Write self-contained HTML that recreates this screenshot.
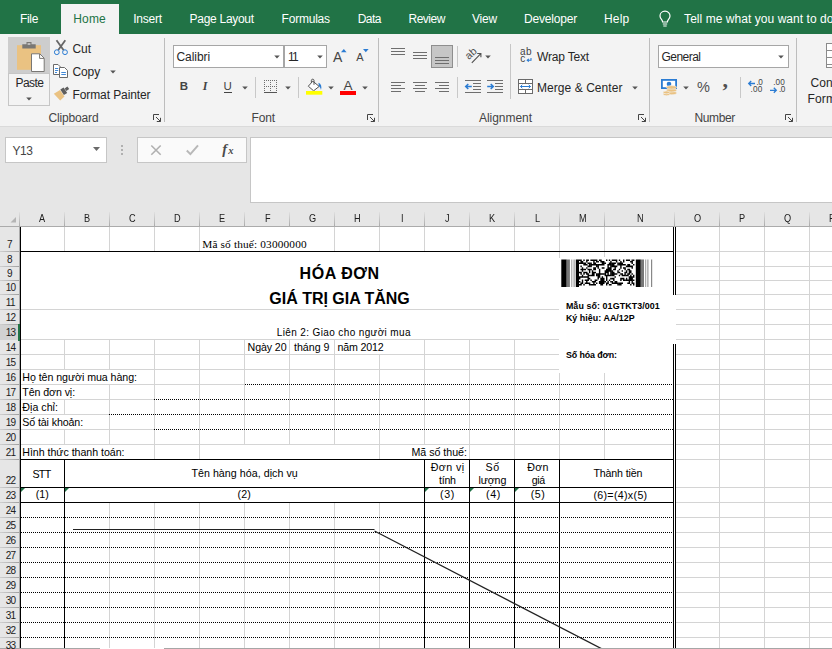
<!DOCTYPE html>
<html><head><meta charset="utf-8"><title>Excel</title>
<style>
*{box-sizing:border-box;margin:0;padding:0}
html,body{width:832px;height:649px;overflow:hidden;background:#e6e6e6}
body{position:relative;font-family:"Liberation Sans",sans-serif;font-size:12px;color:#262626}
.abs{position:absolute}
.r{position:absolute}
.t{position:absolute;white-space:nowrap;line-height:1}
.dot{position:absolute;height:1px;background:repeating-linear-gradient(90deg,#000 0,#000 1px,transparent 1px,transparent 2px)}
.tri{position:absolute;width:0;height:0;border-top:4px solid #1e7145;border-right:4px solid transparent}
#tabs{left:0;top:0;width:832px;height:34px;background:#217346}
#hometab{left:61px;top:4px;width:58px;height:31px;background:#f3f3f3}
#ribbon{left:0;top:34px;width:832px;height:92px;background:#f3f3f3}
.vsep{position:absolute;width:1px;background:#c4c4c4}
.gsep{position:absolute;width:1px;background:#b4b4b4}
.combo{position:absolute;background:#fff;border:1px solid #a6a6a6}
.arr{position:absolute;width:0;height:0;border-left:3px solid transparent;border-right:3px solid transparent;border-top:3px solid #555}
</style></head><body>
<div id="tabs" class="abs"><div id="hometab" class="abs"></div></div>
<div id="ribbon" class="abs"></div>
<div class="r" style="left:164px;top:38px;width:1px;height:84px;background:#bdbdbd"></div>
<div class="r" style="left:378px;top:38px;width:1px;height:84px;background:#bdbdbd"></div>
<div class="r" style="left:649px;top:38px;width:1px;height:84px;background:#bdbdbd"></div>
<div class="r" style="left:796px;top:38px;width:1px;height:84px;background:#bdbdbd"></div>
<div class="r" style="left:8px;top:37px;width:42px;height:37px;background:#cdcdcd"></div>
<div class="r" style="left:8px;top:73px;width:42px;height:33px;background:#f3f3f3;border:1px solid #c6c6c6"></div>
<svg class="abs" style="left:14px;top:40px" width="34" height="34" viewBox="0 0 34 34"><rect x="3" y="5.2" width="24" height="24.6" fill="#eac282"/><path d="M8.3 4.2h4.2v-2.2h5v2.2h4.2v4.4h-13.4z" fill="#797774"/><rect x="13.6" y="3.2" width="2.8" height="1.6" fill="#cdcdcd"/><path d="M17.5 13.8h8.3l4.4 4.4v13.3h-12.7z" fill="#fff" stroke="#797774" stroke-width="1"/><path d="M25.6 14v4.4h4.4" fill="none" stroke="#797774" stroke-width="1"/></svg>
<svg class="abs" style="left:24.5px;top:95.5px" width="8" height="6" viewBox="0 0 8 6"><path d="M1.2 1.6h5.6L4 4.6z" fill="#555"/></svg>
<svg class="abs" style="left:52px;top:39px" width="18" height="18" viewBox="0 0 18 18"><path d="M4.500 1.300L11.700 11.200M13.300 1.300L6.100 11.200" stroke="#666" stroke-width="1.800" fill="none"/><circle cx="4.800" cy="13.200" r="2.400" fill="#f3f3f3" stroke="#2b7cd3" stroke-width="1"/><circle cx="13" cy="13.200" r="2.400" fill="#f3f3f3" stroke="#2b7cd3" stroke-width="1"/></svg>
<svg class="abs" style="left:52px;top:63px" width="18" height="16" viewBox="0 0 18 16"><path d="M1.500 1.500h4.500l2.500 2.500v7.500h-7z" fill="#fff" stroke="#6a6a6a"/><path d="M3 5.500h3.200M3 7.500h3.200M3 9.500h2" stroke="#2b7cd3" stroke-width="0.900"/><path d="M7.500 4.500h5l3 3v7h-8z" fill="#fff" stroke="#6a6a6a"/><path d="M9.300 9.500h4.600M9.300 11.500h4.600" stroke="#2b7cd3" stroke-width="0.900"/></svg>
<svg class="abs" style="left:108.5px;top:68.8px" width="8" height="6" viewBox="0 0 8 6"><path d="M1.2 1.6h5.6L4 4.6z" fill="#555"/></svg>
<svg class="abs" style="left:52px;top:85px" width="19" height="18" viewBox="0 0 19 18"><path d="M1.800 8.700L8 5l4.500 6.500L8.200 15.600z" fill="#eac282"/><path d="M8.300 4.600l3.300-2.100 3.600 5.400-3.300 2.200z" fill="#5e5e5e"/><path d="M12.600 3.500l2.800-1.900 1.800 2.300-2.900 2.100z" fill="#5e5e5e"/></svg>
<svg class="abs" style="left:153px;top:114px" width="9" height="9" viewBox="0 0 9 9"><path d="M0.5 6V0.5H6" stroke="#444" fill="none"/><path d="M3 3L7.5 7.5M7.5 3.8V7.5H3.8" stroke="#444" fill="none"/></svg>
<div class="combo" style="left:173px;top:45px;width:111px;height:23px"></div>
<div class="combo" style="left:284px;top:45px;width:43px;height:23px"></div>
<svg class="abs" style="left:272.5px;top:54px" width="8" height="6" viewBox="0 0 8 6"><path d="M1.2 1.6h5.6L4 4.6z" fill="#555"/></svg>
<svg class="abs" style="left:315.5px;top:54px" width="8" height="6" viewBox="0 0 8 6"><path d="M1.2 1.6h5.6L4 4.6z" fill="#555"/></svg>
<svg class="abs" style="left:340px;top:48px" width="8" height="5" viewBox="0 0 8 5"><path d="M1 4.2L3.8 1l2.8 3.2z" fill="#2b7cd3"/></svg>
<svg class="abs" style="left:362px;top:48px" width="8" height="5" viewBox="0 0 8 5"><path d="M1 1h5.6L3.8 4.2z" fill="#2b7cd3"/></svg>
<div class="r" style="left:223.5px;top:92px;width:8px;height:1px;background:#444"></div>
<svg class="abs" style="left:240.5px;top:84.5px" width="8" height="6" viewBox="0 0 8 6"><path d="M1.2 1.6h5.6L4 4.6z" fill="#555"/></svg>
<div class="r" style="left:255px;top:77px;width:1px;height:21px;background:#c8c8c8"></div>
<svg class="abs" style="left:263px;top:78px" width="16" height="16" viewBox="0 0 16 16"><rect x="1" y="2" width="1" height="1" fill="#6e6e6e"/><rect x="1" y="8" width="1" height="1" fill="#6e6e6e"/><rect x="3" y="2" width="1" height="1" fill="#6e6e6e"/><rect x="3" y="8" width="1" height="1" fill="#6e6e6e"/><rect x="5" y="2" width="1" height="1" fill="#6e6e6e"/><rect x="5" y="8" width="1" height="1" fill="#6e6e6e"/><rect x="7" y="2" width="1" height="1" fill="#6e6e6e"/><rect x="7" y="8" width="1" height="1" fill="#6e6e6e"/><rect x="9" y="2" width="1" height="1" fill="#6e6e6e"/><rect x="9" y="8" width="1" height="1" fill="#6e6e6e"/><rect x="11" y="2" width="1" height="1" fill="#6e6e6e"/><rect x="11" y="8" width="1" height="1" fill="#6e6e6e"/><rect x="13" y="2" width="1" height="1" fill="#6e6e6e"/><rect x="13" y="8" width="1" height="1" fill="#6e6e6e"/><rect x="1" y="2" width="1" height="1" fill="#6e6e6e"/><rect x="7" y="2" width="1" height="1" fill="#6e6e6e"/><rect x="13" y="2" width="1" height="1" fill="#6e6e6e"/><rect x="1" y="4" width="1" height="1" fill="#6e6e6e"/><rect x="7" y="4" width="1" height="1" fill="#6e6e6e"/><rect x="13" y="4" width="1" height="1" fill="#6e6e6e"/><rect x="1" y="6" width="1" height="1" fill="#6e6e6e"/><rect x="7" y="6" width="1" height="1" fill="#6e6e6e"/><rect x="13" y="6" width="1" height="1" fill="#6e6e6e"/><rect x="1" y="8" width="1" height="1" fill="#6e6e6e"/><rect x="7" y="8" width="1" height="1" fill="#6e6e6e"/><rect x="13" y="8" width="1" height="1" fill="#6e6e6e"/><rect x="1" y="10" width="1" height="1" fill="#6e6e6e"/><rect x="7" y="10" width="1" height="1" fill="#6e6e6e"/><rect x="13" y="10" width="1" height="1" fill="#6e6e6e"/><rect x="1" y="12" width="1" height="1" fill="#6e6e6e"/><rect x="7" y="12" width="1" height="1" fill="#6e6e6e"/><rect x="13" y="12" width="1" height="1" fill="#6e6e6e"/><rect x="1" y="14" width="13" height="1" fill="#555"/></svg>
<svg class="abs" style="left:283.5px;top:84.5px" width="8" height="6" viewBox="0 0 8 6"><path d="M1.2 1.6h5.6L4 4.6z" fill="#555"/></svg>
<div class="r" style="left:298px;top:77px;width:1px;height:21px;background:#c8c8c8"></div>
<svg class="abs" style="left:305px;top:77px" width="19" height="19" viewBox="0 0 19 19"><path d="M3.300 9.200L7.800 4.200l6.400 5.200-5.600 4.400z" fill="#fff" stroke="#555" stroke-width="1"/><path d="M6.400 5.800V3.300c0-1.500 2.600-1.500 2.600 0v4.500" fill="none" stroke="#555" stroke-width="1"/><path d="M13.400 5.800c2.800 1 3.600 3.600 2.600 7.200-.4-1.800-1-2.800-2-3.800z" fill="#2b7cd3"/><rect x="1" y="14" width="16.300" height="3.700" fill="#ffff00"/></svg>
<svg class="abs" style="left:326.5px;top:84.5px" width="8" height="6" viewBox="0 0 8 6"><path d="M1.2 1.6h5.6L4 4.6z" fill="#555"/></svg>
<div class="r" style="left:340px;top:91px;width:16px;height:4px;background:#ff0000"></div>
<svg class="abs" style="left:360.5px;top:84.5px" width="8" height="6" viewBox="0 0 8 6"><path d="M1.2 1.6h5.6L4 4.6z" fill="#555"/></svg>
<svg class="abs" style="left:367px;top:114px" width="9" height="9" viewBox="0 0 9 9"><path d="M0.5 6V0.5H6" stroke="#444" fill="none"/><path d="M3 3L7.5 7.5M7.5 3.8V7.5H3.8" stroke="#444" fill="none"/></svg>
<div class="r" style="left:391px;top:48px;width:14px;height:1px;background:#6e6e6e"></div><div class="r" style="left:391px;top:51px;width:14px;height:1px;background:#6e6e6e"></div><div class="r" style="left:391px;top:54px;width:14px;height:1px;background:#6e6e6e"></div>
<div class="r" style="left:413px;top:52px;width:14px;height:1px;background:#6e6e6e"></div><div class="r" style="left:413px;top:55px;width:14px;height:1px;background:#6e6e6e"></div><div class="r" style="left:413px;top:58px;width:14px;height:1px;background:#6e6e6e"></div>
<div class="r" style="left:431px;top:45px;width:22px;height:23px;background:#c6c6c6;border:1px solid #8e8e8e"></div>
<div class="r" style="left:435px;top:57px;width:14px;height:1px;background:#6e6e6e"></div><div class="r" style="left:435px;top:60px;width:14px;height:1px;background:#6e6e6e"></div><div class="r" style="left:435px;top:63px;width:14px;height:1px;background:#6e6e6e"></div>
<div class="r" style="left:457px;top:46px;width:1px;height:21px;background:#c8c8c8"></div>
<svg class="abs" style="left:462px;top:44px" width="24" height="24" viewBox="0 0 24 24"><text x="0" y="0" font-size="10.500" font-family="Liberation Sans,sans-serif" fill="#505050" transform="translate(6.800,16) rotate(-42)">ab</text><path d="M9.800 18.800L18.800 9.600M15.200 9.500h3.700v3.700" stroke="#505050" stroke-width="1.100" fill="none"/></svg>
<svg class="abs" style="left:483.5px;top:53.5px" width="8" height="6" viewBox="0 0 8 6"><path d="M1.2 1.6h5.6L4 4.6z" fill="#555"/></svg>
<div class="r" style="left:510px;top:44px;width:1px;height:55px;background:#c6c6c6"></div>
<div class="r" style="left:391px;top:82px;width:14px;height:1px;background:#6e6e6e"></div><div class="r" style="left:391px;top:85px;width:10px;height:1px;background:#6e6e6e"></div><div class="r" style="left:391px;top:88px;width:14px;height:1px;background:#6e6e6e"></div><div class="r" style="left:391px;top:91px;width:10px;height:1px;background:#6e6e6e"></div>
<div class="r" style="left:413px;top:82px;width:14px;height:1px;background:#6e6e6e"></div><div class="r" style="left:415px;top:85px;width:10px;height:1px;background:#6e6e6e"></div><div class="r" style="left:413px;top:88px;width:14px;height:1px;background:#6e6e6e"></div><div class="r" style="left:415px;top:91px;width:10px;height:1px;background:#6e6e6e"></div>
<div class="r" style="left:435px;top:82px;width:14px;height:1px;background:#6e6e6e"></div><div class="r" style="left:439px;top:85px;width:10px;height:1px;background:#6e6e6e"></div><div class="r" style="left:435px;top:88px;width:14px;height:1px;background:#6e6e6e"></div><div class="r" style="left:439px;top:91px;width:10px;height:1px;background:#6e6e6e"></div>
<div class="r" style="left:457px;top:77px;width:1px;height:21px;background:#c8c8c8"></div>
<div class="r" style="left:465px;top:80px;width:16px;height:1px;background:#6e6e6e"></div><div class="r" style="left:473px;top:83px;width:8px;height:1px;background:#6e6e6e"></div><div class="r" style="left:473px;top:86px;width:8px;height:1px;background:#6e6e6e"></div><div class="r" style="left:473px;top:89px;width:8px;height:1px;background:#6e6e6e"></div><div class="r" style="left:465px;top:92px;width:16px;height:1px;background:#6e6e6e"></div>
<svg class="abs" style="left:464px;top:82px" width="9" height="9" viewBox="0 0 9 9"><path d="M7.800 4.500H2M4.300 2L1.700 4.500l2.600 2.500" stroke="#2b7cd3" stroke-width="1.500" fill="none"/></svg>
<div class="r" style="left:487px;top:80px;width:16px;height:1px;background:#6e6e6e"></div><div class="r" style="left:495px;top:83px;width:8px;height:1px;background:#6e6e6e"></div><div class="r" style="left:495px;top:86px;width:8px;height:1px;background:#6e6e6e"></div><div class="r" style="left:495px;top:89px;width:8px;height:1px;background:#6e6e6e"></div><div class="r" style="left:487px;top:92px;width:16px;height:1px;background:#6e6e6e"></div>
<svg class="abs" style="left:486px;top:82px" width="9" height="9" viewBox="0 0 9 9"><path d="M1.200 4.500H7M4.700 2l2.600 2.500-2.600 2.500" stroke="#2b7cd3" stroke-width="1.500" fill="none"/></svg>
<svg class="abs" style="left:525px;top:56px" width="8" height="8" viewBox="0 0 8 8"><path d="M6 2v2.200H2.500M3.800 2.800L2.200 4.200l1.600 1.400" stroke="#2b7cd3" stroke-width="1.100" fill="none"/></svg>
<svg class="abs" style="left:517px;top:78px" width="17" height="17" viewBox="0 0 17 17"><rect x="1.500" y="1.500" width="14" height="14" fill="#fff" stroke="#6a6a6a"/><path d="M1.5 5.500h14M1.5 11.500h14M8.500 1.500v4M8.500 11.500v4" stroke="#6a6a6a" fill="none"/><path d="M3.500 8.500h10M5.300 6.800L3.500 8.500l1.800 1.700M11.700 6.800l1.800 1.700-1.800 1.700" stroke="#2b7cd3" stroke-width="1" fill="none"/></svg>
<svg class="abs" style="left:630.5px;top:85px" width="8" height="6" viewBox="0 0 8 6"><path d="M1.2 1.6h5.6L4 4.6z" fill="#555"/></svg>
<svg class="abs" style="left:638px;top:114px" width="9" height="9" viewBox="0 0 9 9"><path d="M0.5 6V0.5H6" stroke="#444" fill="none"/><path d="M3 3L7.5 7.5M7.5 3.8V7.5H3.8" stroke="#444" fill="none"/></svg>
<div class="combo" style="left:658px;top:45px;width:131px;height:23px"></div>
<svg class="abs" style="left:777px;top:54px" width="8" height="6" viewBox="0 0 8 6"><path d="M1.2 1.6h5.6L4 4.6z" fill="#555"/></svg>
<svg class="abs" style="left:659px;top:77px" width="20" height="20" viewBox="0 0 20 20"><rect x="2" y="2" width="16" height="10" fill="#2b7cd3"/><rect x="3.8" y="3.8" width="12.4" height="6.400" fill="#fff"/><circle cx="10" cy="7" r="2.300" fill="#2b7cd3"/><g fill="#eac282" stroke="#f3f3f3" stroke-width="0.600"><ellipse cx="12.5" cy="16" rx="5.200" ry="1.800"/><ellipse cx="12.5" cy="13.200" rx="5.200" ry="1.800"/><ellipse cx="12.5" cy="10.400" rx="5.200" ry="1.800"/></g><g fill="#eac282" stroke="#f3f3f3" stroke-width="0.600"><ellipse cx="7.500" cy="17.300" rx="3.300" ry="1.400"/><ellipse cx="7.500" cy="15.400" rx="3.300" ry="1.400"/></g></svg>
<svg class="abs" style="left:681.5px;top:84.5px" width="8" height="6" viewBox="0 0 8 6"><path d="M1.2 1.6h5.6L4 4.6z" fill="#555"/></svg>
<div class="r" style="left:740px;top:77px;width:1px;height:21px;background:#c8c8c8"></div>
<svg class="abs" style="left:747px;top:79px" width="9" height="8" viewBox="0 0 9 8"><path d="M8 4.500H2M4.200 2L1.700 4.500l2.500 2.500" stroke="#2b7cd3" stroke-width="1.300" fill="none"/></svg>
<svg class="abs" style="left:769px;top:86px" width="9" height="8" viewBox="0 0 9 8"><path d="M1 4.300H7M4.800 1.800l2.500 2.500-2.500 2.500" stroke="#2b7cd3" stroke-width="1.300" fill="none"/></svg>
<svg class="abs" style="left:785px;top:114px" width="9" height="9" viewBox="0 0 9 9"><path d="M0.5 6V0.5H6" stroke="#444" fill="none"/><path d="M3 3L7.5 7.5M7.5 3.8V7.5H3.8" stroke="#444" fill="none"/></svg>
<svg class="abs" style="left:824px;top:42px" width="8" height="27" viewBox="0 0 8 27"><rect x="2.500" y="1.500" width="10" height="24" fill="#fff" stroke="#8a8a8a"/><path d="M2.500 8.500h8M2.500 15.500h8M2.500 22.500h8" stroke="#8a8a8a"/></svg>
<div class="r" style="left:0px;top:126px;width:832px;height:1px;background:#dadada"></div>
<svg class="abs" style="left:657px;top:9px" width="16" height="20" viewBox="0 0 16 20"><path d="M8 2.200c-3 0-5 2.200-5 4.800 0 1.800 1 2.900 1.800 3.900.5.700.8 1.300.8 2.100h4.800c0-.8.300-1.400.8-2.100C12 9.900 13 8.800 13 7c0-2.600-2-4.800-5-4.800z" fill="none" stroke="#fff" stroke-width="1.200"/><path d="M5.800 15h4.400M6.300 17h3.400" stroke="#fff" stroke-width="1.100"/></svg>
<div class="r" style="left:5px;top:137px;width:102px;height:26px;background:#fff;border:1px solid #c6c6c6"></div>
<svg class="abs" style="left:92px;top:146px" width="9" height="6" viewBox="0 0 9 6"><path d="M1 1h7L4.500 5z" fill="#6a6a6a"/></svg>
<div class="r" style="left:121px;top:145px;width:2px;height:2px;background:#b0b0b0"></div>
<div class="r" style="left:121px;top:149px;width:2px;height:2px;background:#b0b0b0"></div>
<div class="r" style="left:121px;top:153px;width:2px;height:2px;background:#b0b0b0"></div>
<div class="r" style="left:137px;top:137px;width:110px;height:26px;background:#fafafa;border:1px solid #c6c6c6"></div>
<svg class="abs" style="left:150px;top:144px" width="12" height="12" viewBox="0 0 12 12"><path d="M1.300 1.500l9.400 9.200M10.700 1.500l-9.400 9.200" stroke="#b0b0b0" stroke-width="1.600" fill="none"/></svg>
<svg class="abs" style="left:185px;top:143px" width="16" height="13" viewBox="0 0 16 13"><path d="M1.800 7.500l3.600 3.600L13 2.400" stroke="#b8b8b8" stroke-width="2" fill="none"/></svg>
<div class="r" style="left:250px;top:137px;width:590px;height:66px;background:#fff;border:1px solid #c6c6c6"></div>
<div id="sheet">
<div class="r" style="left:20px;top:227px;width:812px;height:422px;background:#fff"></div>
<div class="r" style="left:719px;top:227px;width:1px;height:422px;background:#d4d4d4"></div>
<div class="r" style="left:764px;top:227px;width:1px;height:422px;background:#d4d4d4"></div>
<div class="r" style="left:809px;top:227px;width:1px;height:422px;background:#d4d4d4"></div>
<div class="r" style="left:676px;top:251px;width:156px;height:1px;background:#d4d4d4"></div>
<div class="r" style="left:676px;top:266px;width:156px;height:1px;background:#d4d4d4"></div>
<div class="r" style="left:676px;top:280px;width:156px;height:1px;background:#d4d4d4"></div>
<div class="r" style="left:676px;top:294px;width:156px;height:1px;background:#d4d4d4"></div>
<div class="r" style="left:676px;top:309px;width:156px;height:1px;background:#d4d4d4"></div>
<div class="r" style="left:676px;top:324px;width:156px;height:1px;background:#d4d4d4"></div>
<div class="r" style="left:676px;top:339px;width:156px;height:1px;background:#d4d4d4"></div>
<div class="r" style="left:676px;top:354px;width:156px;height:1px;background:#d4d4d4"></div>
<div class="r" style="left:676px;top:369px;width:156px;height:1px;background:#d4d4d4"></div>
<div class="r" style="left:676px;top:384px;width:156px;height:1px;background:#d4d4d4"></div>
<div class="r" style="left:676px;top:399px;width:156px;height:1px;background:#d4d4d4"></div>
<div class="r" style="left:676px;top:414px;width:156px;height:1px;background:#d4d4d4"></div>
<div class="r" style="left:676px;top:429px;width:156px;height:1px;background:#d4d4d4"></div>
<div class="r" style="left:676px;top:444px;width:156px;height:1px;background:#d4d4d4"></div>
<div class="r" style="left:676px;top:459px;width:156px;height:1px;background:#d4d4d4"></div>
<div class="r" style="left:676px;top:487px;width:156px;height:1px;background:#d4d4d4"></div>
<div class="r" style="left:676px;top:502px;width:156px;height:1px;background:#d4d4d4"></div>
<div class="r" style="left:676px;top:517px;width:156px;height:1px;background:#d4d4d4"></div>
<div class="r" style="left:676px;top:532px;width:156px;height:1px;background:#d4d4d4"></div>
<div class="r" style="left:676px;top:547px;width:156px;height:1px;background:#d4d4d4"></div>
<div class="r" style="left:676px;top:562px;width:156px;height:1px;background:#d4d4d4"></div>
<div class="r" style="left:676px;top:577px;width:156px;height:1px;background:#d4d4d4"></div>
<div class="r" style="left:676px;top:592px;width:156px;height:1px;background:#d4d4d4"></div>
<div class="r" style="left:676px;top:607px;width:156px;height:1px;background:#d4d4d4"></div>
<div class="r" style="left:676px;top:622px;width:156px;height:1px;background:#d4d4d4"></div>
<div class="r" style="left:676px;top:637px;width:156px;height:1px;background:#d4d4d4"></div>
<div class="r" style="left:64px;top:227px;width:1px;height:25px;background:#d4d4d4"></div>
<div class="r" style="left:109px;top:227px;width:1px;height:25px;background:#d4d4d4"></div>
<div class="r" style="left:154px;top:227px;width:1px;height:25px;background:#d4d4d4"></div>
<div class="r" style="left:199px;top:227px;width:1px;height:25px;background:#d4d4d4"></div>
<div class="r" style="left:334px;top:227px;width:1px;height:25px;background:#d4d4d4"></div>
<div class="r" style="left:379px;top:227px;width:1px;height:25px;background:#d4d4d4"></div>
<div class="r" style="left:424px;top:227px;width:1px;height:25px;background:#d4d4d4"></div>
<div class="r" style="left:469px;top:227px;width:1px;height:25px;background:#d4d4d4"></div>
<div class="r" style="left:514px;top:227px;width:1px;height:25px;background:#d4d4d4"></div>
<div class="r" style="left:559px;top:227px;width:1px;height:25px;background:#d4d4d4"></div>
<div class="r" style="left:604px;top:227px;width:1px;height:25px;background:#d4d4d4"></div>
<div class="r" style="left:559px;top:252px;width:1px;height:6px;background:#d4d4d4"></div>
<div class="r" style="left:604px;top:252px;width:1px;height:6px;background:#d4d4d4"></div>
<div class="r" style="left:64px;top:340px;width:1px;height:15px;background:#d4d4d4"></div>
<div class="r" style="left:64px;top:355px;width:1px;height:15px;background:#d4d4d4"></div>
<div class="r" style="left:109px;top:340px;width:1px;height:15px;background:#d4d4d4"></div>
<div class="r" style="left:109px;top:355px;width:1px;height:15px;background:#d4d4d4"></div>
<div class="r" style="left:154px;top:340px;width:1px;height:15px;background:#d4d4d4"></div>
<div class="r" style="left:154px;top:355px;width:1px;height:15px;background:#d4d4d4"></div>
<div class="r" style="left:199px;top:340px;width:1px;height:15px;background:#d4d4d4"></div>
<div class="r" style="left:199px;top:355px;width:1px;height:15px;background:#d4d4d4"></div>
<div class="r" style="left:244px;top:340px;width:1px;height:15px;background:#d4d4d4"></div>
<div class="r" style="left:244px;top:355px;width:1px;height:15px;background:#d4d4d4"></div>
<div class="r" style="left:289px;top:340px;width:1px;height:15px;background:#d4d4d4"></div>
<div class="r" style="left:289px;top:355px;width:1px;height:15px;background:#d4d4d4"></div>
<div class="r" style="left:334px;top:340px;width:1px;height:15px;background:#d4d4d4"></div>
<div class="r" style="left:334px;top:355px;width:1px;height:15px;background:#d4d4d4"></div>
<div class="r" style="left:379px;top:355px;width:1px;height:15px;background:#d4d4d4"></div>
<div class="r" style="left:424px;top:340px;width:1px;height:15px;background:#d4d4d4"></div>
<div class="r" style="left:424px;top:355px;width:1px;height:15px;background:#d4d4d4"></div>
<div class="r" style="left:469px;top:340px;width:1px;height:15px;background:#d4d4d4"></div>
<div class="r" style="left:469px;top:355px;width:1px;height:15px;background:#d4d4d4"></div>
<div class="r" style="left:514px;top:340px;width:1px;height:15px;background:#d4d4d4"></div>
<div class="r" style="left:514px;top:355px;width:1px;height:15px;background:#d4d4d4"></div>
<div class="r" style="left:154px;top:370px;width:1px;height:15px;background:#d4d4d4"></div>
<div class="r" style="left:199px;top:370px;width:1px;height:15px;background:#d4d4d4"></div>
<div class="r" style="left:244px;top:370px;width:1px;height:15px;background:#d4d4d4"></div>
<div class="r" style="left:289px;top:370px;width:1px;height:15px;background:#d4d4d4"></div>
<div class="r" style="left:334px;top:370px;width:1px;height:15px;background:#d4d4d4"></div>
<div class="r" style="left:379px;top:370px;width:1px;height:15px;background:#d4d4d4"></div>
<div class="r" style="left:424px;top:370px;width:1px;height:15px;background:#d4d4d4"></div>
<div class="r" style="left:469px;top:370px;width:1px;height:15px;background:#d4d4d4"></div>
<div class="r" style="left:514px;top:370px;width:1px;height:15px;background:#d4d4d4"></div>
<div class="r" style="left:559px;top:370px;width:1px;height:15px;background:#d4d4d4"></div>
<div class="r" style="left:604px;top:370px;width:1px;height:15px;background:#d4d4d4"></div>
<div class="r" style="left:109px;top:385px;width:1px;height:15px;background:#d4d4d4"></div>
<div class="r" style="left:154px;top:385px;width:1px;height:15px;background:#d4d4d4"></div>
<div class="r" style="left:199px;top:385px;width:1px;height:15px;background:#d4d4d4"></div>
<div class="r" style="left:244px;top:385px;width:1px;height:15px;background:#d4d4d4"></div>
<div class="r" style="left:289px;top:385px;width:1px;height:15px;background:#d4d4d4"></div>
<div class="r" style="left:334px;top:385px;width:1px;height:15px;background:#d4d4d4"></div>
<div class="r" style="left:379px;top:385px;width:1px;height:15px;background:#d4d4d4"></div>
<div class="r" style="left:424px;top:385px;width:1px;height:15px;background:#d4d4d4"></div>
<div class="r" style="left:469px;top:385px;width:1px;height:15px;background:#d4d4d4"></div>
<div class="r" style="left:514px;top:385px;width:1px;height:15px;background:#d4d4d4"></div>
<div class="r" style="left:559px;top:385px;width:1px;height:15px;background:#d4d4d4"></div>
<div class="r" style="left:604px;top:385px;width:1px;height:15px;background:#d4d4d4"></div>
<div class="r" style="left:64px;top:400px;width:1px;height:15px;background:#d4d4d4"></div>
<div class="r" style="left:109px;top:400px;width:1px;height:15px;background:#d4d4d4"></div>
<div class="r" style="left:154px;top:400px;width:1px;height:15px;background:#d4d4d4"></div>
<div class="r" style="left:199px;top:400px;width:1px;height:15px;background:#d4d4d4"></div>
<div class="r" style="left:244px;top:400px;width:1px;height:15px;background:#d4d4d4"></div>
<div class="r" style="left:289px;top:400px;width:1px;height:15px;background:#d4d4d4"></div>
<div class="r" style="left:334px;top:400px;width:1px;height:15px;background:#d4d4d4"></div>
<div class="r" style="left:379px;top:400px;width:1px;height:15px;background:#d4d4d4"></div>
<div class="r" style="left:424px;top:400px;width:1px;height:15px;background:#d4d4d4"></div>
<div class="r" style="left:469px;top:400px;width:1px;height:15px;background:#d4d4d4"></div>
<div class="r" style="left:514px;top:400px;width:1px;height:15px;background:#d4d4d4"></div>
<div class="r" style="left:559px;top:400px;width:1px;height:15px;background:#d4d4d4"></div>
<div class="r" style="left:604px;top:400px;width:1px;height:15px;background:#d4d4d4"></div>
<div class="r" style="left:109px;top:415px;width:1px;height:15px;background:#d4d4d4"></div>
<div class="r" style="left:154px;top:415px;width:1px;height:15px;background:#d4d4d4"></div>
<div class="r" style="left:199px;top:415px;width:1px;height:15px;background:#d4d4d4"></div>
<div class="r" style="left:244px;top:415px;width:1px;height:15px;background:#d4d4d4"></div>
<div class="r" style="left:289px;top:415px;width:1px;height:15px;background:#d4d4d4"></div>
<div class="r" style="left:334px;top:415px;width:1px;height:15px;background:#d4d4d4"></div>
<div class="r" style="left:379px;top:415px;width:1px;height:15px;background:#d4d4d4"></div>
<div class="r" style="left:424px;top:415px;width:1px;height:15px;background:#d4d4d4"></div>
<div class="r" style="left:469px;top:415px;width:1px;height:15px;background:#d4d4d4"></div>
<div class="r" style="left:514px;top:415px;width:1px;height:15px;background:#d4d4d4"></div>
<div class="r" style="left:559px;top:415px;width:1px;height:15px;background:#d4d4d4"></div>
<div class="r" style="left:604px;top:415px;width:1px;height:15px;background:#d4d4d4"></div>
<div class="r" style="left:64px;top:430px;width:1px;height:15px;background:#d4d4d4"></div>
<div class="r" style="left:109px;top:430px;width:1px;height:15px;background:#d4d4d4"></div>
<div class="r" style="left:154px;top:430px;width:1px;height:15px;background:#d4d4d4"></div>
<div class="r" style="left:199px;top:430px;width:1px;height:15px;background:#d4d4d4"></div>
<div class="r" style="left:244px;top:430px;width:1px;height:15px;background:#d4d4d4"></div>
<div class="r" style="left:289px;top:430px;width:1px;height:15px;background:#d4d4d4"></div>
<div class="r" style="left:334px;top:430px;width:1px;height:15px;background:#d4d4d4"></div>
<div class="r" style="left:379px;top:430px;width:1px;height:15px;background:#d4d4d4"></div>
<div class="r" style="left:424px;top:430px;width:1px;height:15px;background:#d4d4d4"></div>
<div class="r" style="left:469px;top:430px;width:1px;height:15px;background:#d4d4d4"></div>
<div class="r" style="left:514px;top:430px;width:1px;height:15px;background:#d4d4d4"></div>
<div class="r" style="left:559px;top:430px;width:1px;height:15px;background:#d4d4d4"></div>
<div class="r" style="left:604px;top:430px;width:1px;height:15px;background:#d4d4d4"></div>
<div class="r" style="left:154px;top:445px;width:1px;height:15px;background:#d4d4d4"></div>
<div class="r" style="left:199px;top:445px;width:1px;height:15px;background:#d4d4d4"></div>
<div class="r" style="left:379px;top:445px;width:1px;height:15px;background:#d4d4d4"></div>
<div class="r" style="left:469px;top:445px;width:1px;height:15px;background:#d4d4d4"></div>
<div class="r" style="left:514px;top:445px;width:1px;height:15px;background:#d4d4d4"></div>
<div class="r" style="left:559px;top:445px;width:1px;height:15px;background:#d4d4d4"></div>
<div class="r" style="left:604px;top:445px;width:1px;height:15px;background:#d4d4d4"></div>
<div class="r" style="left:21px;top:309px;width:538px;height:1px;background:#d4d4d4"></div>
<div class="r" style="left:21px;top:339px;width:538px;height:1px;background:#d4d4d4"></div>
<div class="r" style="left:21px;top:354px;width:538px;height:1px;background:#d4d4d4"></div>
<div class="r" style="left:21px;top:369px;width:538px;height:1px;background:#d4d4d4"></div>
<div class="r" style="left:21px;top:384px;width:223px;height:1px;background:#d4d4d4"></div>
<div class="r" style="left:21px;top:399px;width:133px;height:1px;background:#d4d4d4"></div>
<div class="r" style="left:21px;top:414px;width:88px;height:1px;background:#d4d4d4"></div>
<div class="r" style="left:21px;top:429px;width:133px;height:1px;background:#d4d4d4"></div>
<div class="r" style="left:21px;top:444px;width:652px;height:1px;background:#d4d4d4"></div>
<div class="r" style="left:109px;top:503px;width:1px;height:146px;background:#d4d4d4"></div>
<div class="r" style="left:154px;top:503px;width:1px;height:146px;background:#d4d4d4"></div>
<div class="r" style="left:199px;top:503px;width:1px;height:146px;background:#d4d4d4"></div>
<div class="r" style="left:244px;top:503px;width:1px;height:146px;background:#d4d4d4"></div>
<div class="r" style="left:289px;top:503px;width:1px;height:146px;background:#d4d4d4"></div>
<div class="r" style="left:334px;top:503px;width:1px;height:146px;background:#d4d4d4"></div>
<div class="r" style="left:379px;top:503px;width:1px;height:146px;background:#d4d4d4"></div>
<div class="dot" style="left:245px;top:384px;width:428px"></div>
<div class="dot" style="left:154px;top:399px;width:519px"></div>
<div class="dot" style="left:109px;top:414px;width:564px"></div>
<div class="dot" style="left:154px;top:429px;width:519px"></div>
<div class="dot" style="left:21px;top:517px;width:652px"></div>
<div class="dot" style="left:21px;top:532px;width:652px"></div>
<div class="dot" style="left:21px;top:547px;width:652px"></div>
<div class="dot" style="left:21px;top:562px;width:652px"></div>
<div class="dot" style="left:21px;top:577px;width:652px"></div>
<div class="dot" style="left:21px;top:592px;width:652px"></div>
<div class="dot" style="left:21px;top:607px;width:652px"></div>
<div class="dot" style="left:21px;top:622px;width:652px"></div>
<div class="dot" style="left:21px;top:637px;width:652px"></div>
<div class="r" style="left:20px;top:227px;width:1px;height:422px;background:#000"></div>
<div class="r" style="left:673px;top:227px;width:1px;height:422px;background:#000"></div>
<div class="r" style="left:675px;top:227px;width:1px;height:422px;background:#000"></div>
<div class="r" style="left:20px;top:251px;width:654px;height:1px;background:#000"></div>
<div class="r" style="left:20px;top:459px;width:654px;height:1px;background:#000"></div>
<div class="r" style="left:20px;top:487px;width:654px;height:1px;background:#000"></div>
<div class="r" style="left:20px;top:502px;width:654px;height:1px;background:#000"></div>
<div class="r" style="left:64px;top:460px;width:1px;height:189px;background:#000"></div>
<div class="r" style="left:424px;top:460px;width:1px;height:189px;background:#000"></div>
<div class="r" style="left:469px;top:460px;width:1px;height:189px;background:#000"></div>
<div class="r" style="left:514px;top:460px;width:1px;height:189px;background:#000"></div>
<div class="r" style="left:559px;top:460px;width:1px;height:189px;background:#000"></div>
<div class="tri" style="left:21px;top:488px"></div>
<div class="tri" style="left:65px;top:488px"></div>
<div class="tri" style="left:425px;top:488px"></div>
<div class="tri" style="left:470px;top:488px"></div>
<div class="tri" style="left:515px;top:488px"></div>
<div class="r" style="left:560px;top:257px;width:113px;height:38px;background:#fff"></div>
<div class="r" style="left:559px;top:295px;width:117px;height:49px;background:#fff"></div>
<div class="r" style="left:559px;top:344px;width:114px;height:29px;background:#fff"></div>
<svg class="abs" style="left:555px;top:255px" width="105" height="36" viewBox="555 255 105 36"><rect x="561.3" y="259.5" width="5.4" height="27.5" fill="#000"/><rect x="566.7" y="259.5" width="3.2" height="27.5" fill="#777"/><rect x="571.3" y="259.5" width="1" height="27.5" fill="#999"/><rect x="573.6" y="259.5" width="1" height="27.5" fill="#888"/><rect x="575.8" y="259.5" width="3.2" height="27.5" fill="#000"/><rect x="635.8" y="259.5" width="5" height="27.5" fill="#000"/><rect x="640.8" y="259.5" width="3.2" height="27.5" fill="#777"/><rect x="645.2" y="259.5" width="1" height="27.5" fill="#999"/><rect x="647.4" y="259.5" width="1" height="27.5" fill="#888"/><rect x="651" y="259.5" width="1.2" height="27.5" fill="#888"/><filter id="bl" x="-5%" y="-5%" width="110%" height="110%"><feGaussianBlur stdDeviation="0.45"/></filter><path d="M579.0 259.50h1.42v1.53h-1.42zM580.4 259.50h1.42v1.53h-1.42zM583.3 259.50h1.42v1.53h-1.42zM586.1 259.50h1.42v1.53h-1.42zM587.5 259.50h1.42v1.53h-1.42zM590.4 259.50h1.42v1.53h-1.42zM591.8 259.50h1.42v1.53h-1.42zM593.2 259.50h1.42v1.53h-1.42zM594.6 259.50h1.42v1.53h-1.42zM596.0 259.50h1.42v1.53h-1.42zM598.9 259.50h1.42v1.53h-1.42zM600.3 259.50h1.42v1.53h-1.42zM606.0 259.50h1.42v1.53h-1.42zM608.8 259.50h1.42v1.53h-1.42zM611.7 259.50h1.42v1.53h-1.42zM613.1 259.50h1.42v1.53h-1.42zM614.5 259.50h1.42v1.53h-1.42zM615.9 259.50h1.42v1.53h-1.42zM618.8 259.50h1.42v1.53h-1.42zM623.0 259.50h1.42v1.53h-1.42zM625.9 259.50h1.42v1.53h-1.42zM627.3 259.50h1.42v1.53h-1.42zM628.7 259.50h1.42v1.53h-1.42zM631.5 259.50h1.42v1.53h-1.42zM633.0 259.50h1.42v1.53h-1.42zM580.4 261.03h1.42v1.53h-1.42zM581.8 261.03h1.42v1.53h-1.42zM586.1 261.03h1.42v1.53h-1.42zM593.2 261.03h1.42v1.53h-1.42zM596.0 261.03h1.42v1.53h-1.42zM597.5 261.03h1.42v1.53h-1.42zM600.3 261.03h1.42v1.53h-1.42zM601.7 261.03h1.42v1.53h-1.42zM603.1 261.03h1.42v1.53h-1.42zM610.2 261.03h1.42v1.53h-1.42zM615.9 261.03h1.42v1.53h-1.42zM620.2 261.03h1.42v1.53h-1.42zM623.0 261.03h1.42v1.53h-1.42zM630.1 261.03h1.42v1.53h-1.42zM631.5 261.03h1.42v1.53h-1.42zM579.0 262.56h1.42v1.53h-1.42zM580.4 262.56h1.42v1.53h-1.42zM581.8 262.56h1.42v1.53h-1.42zM583.3 262.56h1.42v1.53h-1.42zM584.7 262.56h1.42v1.53h-1.42zM587.5 262.56h1.42v1.53h-1.42zM588.9 262.56h1.42v1.53h-1.42zM590.4 262.56h1.42v1.53h-1.42zM593.2 262.56h1.42v1.53h-1.42zM594.6 262.56h1.42v1.53h-1.42zM601.7 262.56h1.42v1.53h-1.42zM603.1 262.56h1.42v1.53h-1.42zM604.6 262.56h1.42v1.53h-1.42zM608.8 262.56h1.42v1.53h-1.42zM610.2 262.56h1.42v1.53h-1.42zM611.7 262.56h1.42v1.53h-1.42zM613.1 262.56h1.42v1.53h-1.42zM614.5 262.56h1.42v1.53h-1.42zM617.3 262.56h1.42v1.53h-1.42zM618.8 262.56h1.42v1.53h-1.42zM620.2 262.56h1.42v1.53h-1.42zM621.6 262.56h1.42v1.53h-1.42zM631.5 262.56h1.42v1.53h-1.42zM583.3 264.09h1.42v1.53h-1.42zM584.7 264.09h1.42v1.53h-1.42zM586.1 264.09h1.42v1.53h-1.42zM588.9 264.09h1.42v1.53h-1.42zM590.4 264.09h1.42v1.53h-1.42zM591.8 264.09h1.42v1.53h-1.42zM593.2 264.09h1.42v1.53h-1.42zM594.6 264.09h1.42v1.53h-1.42zM596.0 264.09h1.42v1.53h-1.42zM597.5 264.09h1.42v1.53h-1.42zM598.9 264.09h1.42v1.53h-1.42zM600.3 264.09h1.42v1.53h-1.42zM601.7 264.09h1.42v1.53h-1.42zM603.1 264.09h1.42v1.53h-1.42zM607.4 264.09h1.42v1.53h-1.42zM608.8 264.09h1.42v1.53h-1.42zM610.2 264.09h1.42v1.53h-1.42zM611.7 264.09h1.42v1.53h-1.42zM613.1 264.09h1.42v1.53h-1.42zM617.3 264.09h1.42v1.53h-1.42zM618.8 264.09h1.42v1.53h-1.42zM620.2 264.09h1.42v1.53h-1.42zM621.6 264.09h1.42v1.53h-1.42zM623.0 264.09h1.42v1.53h-1.42zM624.4 264.09h1.42v1.53h-1.42zM627.3 264.09h1.42v1.53h-1.42zM628.7 264.09h1.42v1.53h-1.42zM633.0 264.09h1.42v1.53h-1.42zM580.4 265.62h1.42v1.53h-1.42zM587.5 265.62h1.42v1.53h-1.42zM588.9 265.62h1.42v1.53h-1.42zM590.4 265.62h1.42v1.53h-1.42zM596.0 265.62h1.42v1.53h-1.42zM597.5 265.62h1.42v1.53h-1.42zM607.4 265.62h1.42v1.53h-1.42zM610.2 265.62h1.42v1.53h-1.42zM611.7 265.62h1.42v1.53h-1.42zM613.1 265.62h1.42v1.53h-1.42zM614.5 265.62h1.42v1.53h-1.42zM615.9 265.62h1.42v1.53h-1.42zM620.2 265.62h1.42v1.53h-1.42zM625.9 265.62h1.42v1.53h-1.42zM627.3 265.62h1.42v1.53h-1.42zM628.7 265.62h1.42v1.53h-1.42zM630.1 265.62h1.42v1.53h-1.42zM631.5 265.62h1.42v1.53h-1.42zM581.8 267.15h1.42v1.53h-1.42zM586.1 267.15h1.42v1.53h-1.42zM593.2 267.15h1.42v1.53h-1.42zM594.6 267.15h1.42v1.53h-1.42zM597.5 267.15h1.42v1.53h-1.42zM601.7 267.15h1.42v1.53h-1.42zM603.1 267.15h1.42v1.53h-1.42zM607.4 267.15h1.42v1.53h-1.42zM608.8 267.15h1.42v1.53h-1.42zM610.2 267.15h1.42v1.53h-1.42zM614.5 267.15h1.42v1.53h-1.42zM620.2 267.15h1.42v1.53h-1.42zM623.0 267.15h1.42v1.53h-1.42zM624.4 267.15h1.42v1.53h-1.42zM631.5 267.15h1.42v1.53h-1.42zM580.4 268.68h1.42v1.53h-1.42zM581.8 268.68h1.42v1.53h-1.42zM583.3 268.68h1.42v1.53h-1.42zM584.7 268.68h1.42v1.53h-1.42zM587.5 268.68h1.42v1.53h-1.42zM588.9 268.68h1.42v1.53h-1.42zM590.4 268.68h1.42v1.53h-1.42zM593.2 268.68h1.42v1.53h-1.42zM594.6 268.68h1.42v1.53h-1.42zM598.9 268.68h1.42v1.53h-1.42zM606.0 268.68h1.42v1.53h-1.42zM607.4 268.68h1.42v1.53h-1.42zM608.8 268.68h1.42v1.53h-1.42zM610.2 268.68h1.42v1.53h-1.42zM613.1 268.68h1.42v1.53h-1.42zM614.5 268.68h1.42v1.53h-1.42zM618.8 268.68h1.42v1.53h-1.42zM624.4 268.68h1.42v1.53h-1.42zM627.3 268.68h1.42v1.53h-1.42zM628.7 268.68h1.42v1.53h-1.42zM581.8 270.21h1.42v1.53h-1.42zM588.9 270.21h1.42v1.53h-1.42zM591.8 270.21h1.42v1.53h-1.42zM598.9 270.21h1.42v1.53h-1.42zM604.6 270.21h1.42v1.53h-1.42zM606.0 270.21h1.42v1.53h-1.42zM607.4 270.21h1.42v1.53h-1.42zM608.8 270.21h1.42v1.53h-1.42zM610.2 270.21h1.42v1.53h-1.42zM611.7 270.21h1.42v1.53h-1.42zM617.3 270.21h1.42v1.53h-1.42zM621.6 270.21h1.42v1.53h-1.42zM625.9 270.21h1.42v1.53h-1.42zM628.7 270.21h1.42v1.53h-1.42zM630.1 270.21h1.42v1.53h-1.42zM579.0 271.74h1.42v1.53h-1.42zM580.4 271.74h1.42v1.53h-1.42zM583.3 271.74h1.42v1.53h-1.42zM584.7 271.74h1.42v1.53h-1.42zM586.1 271.74h1.42v1.53h-1.42zM588.9 271.74h1.42v1.53h-1.42zM591.8 271.74h1.42v1.53h-1.42zM593.2 271.74h1.42v1.53h-1.42zM594.6 271.74h1.42v1.53h-1.42zM598.9 271.74h1.42v1.53h-1.42zM604.6 271.74h1.42v1.53h-1.42zM606.0 271.74h1.42v1.53h-1.42zM607.4 271.74h1.42v1.53h-1.42zM610.2 271.74h1.42v1.53h-1.42zM611.7 271.74h1.42v1.53h-1.42zM613.1 271.74h1.42v1.53h-1.42zM617.3 271.74h1.42v1.53h-1.42zM618.8 271.74h1.42v1.53h-1.42zM624.4 271.74h1.42v1.53h-1.42zM625.9 271.74h1.42v1.53h-1.42zM628.7 271.74h1.42v1.53h-1.42zM630.1 271.74h1.42v1.53h-1.42zM580.4 273.27h1.42v1.53h-1.42zM583.3 273.27h1.42v1.53h-1.42zM586.1 273.27h1.42v1.53h-1.42zM587.5 273.27h1.42v1.53h-1.42zM591.8 273.27h1.42v1.53h-1.42zM593.2 273.27h1.42v1.53h-1.42zM596.0 273.27h1.42v1.53h-1.42zM597.5 273.27h1.42v1.53h-1.42zM598.9 273.27h1.42v1.53h-1.42zM600.3 273.27h1.42v1.53h-1.42zM601.7 273.27h1.42v1.53h-1.42zM603.1 273.27h1.42v1.53h-1.42zM604.6 273.27h1.42v1.53h-1.42zM607.4 273.27h1.42v1.53h-1.42zM610.2 273.27h1.42v1.53h-1.42zM611.7 273.27h1.42v1.53h-1.42zM613.1 273.27h1.42v1.53h-1.42zM614.5 273.27h1.42v1.53h-1.42zM615.9 273.27h1.42v1.53h-1.42zM620.2 273.27h1.42v1.53h-1.42zM621.6 273.27h1.42v1.53h-1.42zM624.4 273.27h1.42v1.53h-1.42zM627.3 273.27h1.42v1.53h-1.42zM628.7 273.27h1.42v1.53h-1.42zM631.5 273.27h1.42v1.53h-1.42zM581.8 274.80h1.42v1.53h-1.42zM587.5 274.80h1.42v1.53h-1.42zM588.9 274.80h1.42v1.53h-1.42zM590.4 274.80h1.42v1.53h-1.42zM591.8 274.80h1.42v1.53h-1.42zM593.2 274.80h1.42v1.53h-1.42zM596.0 274.80h1.42v1.53h-1.42zM597.5 274.80h1.42v1.53h-1.42zM598.9 274.80h1.42v1.53h-1.42zM604.6 274.80h1.42v1.53h-1.42zM606.0 274.80h1.42v1.53h-1.42zM607.4 274.80h1.42v1.53h-1.42zM608.8 274.80h1.42v1.53h-1.42zM610.2 274.80h1.42v1.53h-1.42zM611.7 274.80h1.42v1.53h-1.42zM613.1 274.80h1.42v1.53h-1.42zM618.8 274.80h1.42v1.53h-1.42zM621.6 274.80h1.42v1.53h-1.42zM623.0 274.80h1.42v1.53h-1.42zM624.4 274.80h1.42v1.53h-1.42zM625.9 274.80h1.42v1.53h-1.42zM627.3 274.80h1.42v1.53h-1.42zM630.1 274.80h1.42v1.53h-1.42zM633.0 274.80h1.42v1.53h-1.42zM579.0 276.33h1.42v1.53h-1.42zM580.4 276.33h1.42v1.53h-1.42zM581.8 276.33h1.42v1.53h-1.42zM583.3 276.33h1.42v1.53h-1.42zM584.7 276.33h1.42v1.53h-1.42zM586.1 276.33h1.42v1.53h-1.42zM587.5 276.33h1.42v1.53h-1.42zM597.5 276.33h1.42v1.53h-1.42zM598.9 276.33h1.42v1.53h-1.42zM601.7 276.33h1.42v1.53h-1.42zM606.0 276.33h1.42v1.53h-1.42zM614.5 276.33h1.42v1.53h-1.42zM628.7 276.33h1.42v1.53h-1.42zM630.1 276.33h1.42v1.53h-1.42zM631.5 276.33h1.42v1.53h-1.42zM633.0 276.33h1.42v1.53h-1.42zM579.0 277.86h1.42v1.53h-1.42zM587.5 277.86h1.42v1.53h-1.42zM588.9 277.86h1.42v1.53h-1.42zM597.5 277.86h1.42v1.53h-1.42zM600.3 277.86h1.42v1.53h-1.42zM601.7 277.86h1.42v1.53h-1.42zM603.1 277.86h1.42v1.53h-1.42zM606.0 277.86h1.42v1.53h-1.42zM610.2 277.86h1.42v1.53h-1.42zM611.7 277.86h1.42v1.53h-1.42zM613.1 277.86h1.42v1.53h-1.42zM620.2 277.86h1.42v1.53h-1.42zM621.6 277.86h1.42v1.53h-1.42zM623.0 277.86h1.42v1.53h-1.42zM625.9 277.86h1.42v1.53h-1.42zM628.7 277.86h1.42v1.53h-1.42zM630.1 277.86h1.42v1.53h-1.42zM631.5 277.86h1.42v1.53h-1.42zM581.8 279.39h1.42v1.53h-1.42zM584.7 279.39h1.42v1.53h-1.42zM586.1 279.39h1.42v1.53h-1.42zM587.5 279.39h1.42v1.53h-1.42zM590.4 279.39h1.42v1.53h-1.42zM594.6 279.39h1.42v1.53h-1.42zM596.0 279.39h1.42v1.53h-1.42zM600.3 279.39h1.42v1.53h-1.42zM601.7 279.39h1.42v1.53h-1.42zM603.1 279.39h1.42v1.53h-1.42zM606.0 279.39h1.42v1.53h-1.42zM608.8 279.39h1.42v1.53h-1.42zM613.1 279.39h1.42v1.53h-1.42zM620.2 279.39h1.42v1.53h-1.42zM623.0 279.39h1.42v1.53h-1.42zM624.4 279.39h1.42v1.53h-1.42zM625.9 279.39h1.42v1.53h-1.42zM627.3 279.39h1.42v1.53h-1.42zM628.7 279.39h1.42v1.53h-1.42zM630.1 279.39h1.42v1.53h-1.42zM631.5 279.39h1.42v1.53h-1.42zM633.0 279.39h1.42v1.53h-1.42zM579.0 280.92h1.42v1.53h-1.42zM581.8 280.92h1.42v1.53h-1.42zM586.1 280.92h1.42v1.53h-1.42zM591.8 280.92h1.42v1.53h-1.42zM593.2 280.92h1.42v1.53h-1.42zM594.6 280.92h1.42v1.53h-1.42zM598.9 280.92h1.42v1.53h-1.42zM600.3 280.92h1.42v1.53h-1.42zM601.7 280.92h1.42v1.53h-1.42zM603.1 280.92h1.42v1.53h-1.42zM604.6 280.92h1.42v1.53h-1.42zM607.4 280.92h1.42v1.53h-1.42zM610.2 280.92h1.42v1.53h-1.42zM611.7 280.92h1.42v1.53h-1.42zM614.5 280.92h1.42v1.53h-1.42zM615.9 280.92h1.42v1.53h-1.42zM628.7 280.92h1.42v1.53h-1.42zM631.5 280.92h1.42v1.53h-1.42zM580.4 282.45h1.42v1.53h-1.42zM581.8 282.45h1.42v1.53h-1.42zM584.7 282.45h1.42v1.53h-1.42zM586.1 282.45h1.42v1.53h-1.42zM587.5 282.45h1.42v1.53h-1.42zM588.9 282.45h1.42v1.53h-1.42zM593.2 282.45h1.42v1.53h-1.42zM596.0 282.45h1.42v1.53h-1.42zM598.9 282.45h1.42v1.53h-1.42zM600.3 282.45h1.42v1.53h-1.42zM601.7 282.45h1.42v1.53h-1.42zM603.1 282.45h1.42v1.53h-1.42zM606.0 282.45h1.42v1.53h-1.42zM607.4 282.45h1.42v1.53h-1.42zM611.7 282.45h1.42v1.53h-1.42zM613.1 282.45h1.42v1.53h-1.42zM614.5 282.45h1.42v1.53h-1.42zM615.9 282.45h1.42v1.53h-1.42zM617.3 282.45h1.42v1.53h-1.42zM618.8 282.45h1.42v1.53h-1.42zM620.2 282.45h1.42v1.53h-1.42zM621.6 282.45h1.42v1.53h-1.42zM627.3 282.45h1.42v1.53h-1.42zM628.7 282.45h1.42v1.53h-1.42zM631.5 282.45h1.42v1.53h-1.42zM633.0 282.45h1.42v1.53h-1.42zM579.0 283.98h1.42v1.53h-1.42zM580.4 283.98h1.42v1.53h-1.42zM583.3 283.98h1.42v1.53h-1.42zM588.9 283.98h1.42v1.53h-1.42zM590.4 283.98h1.42v1.53h-1.42zM591.8 283.98h1.42v1.53h-1.42zM593.2 283.98h1.42v1.53h-1.42zM594.6 283.98h1.42v1.53h-1.42zM600.3 283.98h1.42v1.53h-1.42zM601.7 283.98h1.42v1.53h-1.42zM606.0 283.98h1.42v1.53h-1.42zM608.8 283.98h1.42v1.53h-1.42zM610.2 283.98h1.42v1.53h-1.42zM617.3 283.98h1.42v1.53h-1.42zM618.8 283.98h1.42v1.53h-1.42zM620.2 283.98h1.42v1.53h-1.42zM630.1 283.98h1.42v1.53h-1.42zM633.0 283.98h1.42v1.53h-1.42z" fill="#000" filter="url(#bl)"/></svg>
<svg class="abs" style="left:0;top:500px" width="832" height="149" viewBox="0 500 832 149"><path d="M73 529.5H374.5" stroke="#222" stroke-width="1.2" fill="none"/><path d="M374.5 531L606 651" stroke="#222" stroke-width="1.3" fill="none"/></svg>
<div class="r" style="left:0px;top:207px;width:832px;height:20px;background:#e6e6e6"></div>
<div class="r" style="left:0px;top:226px;width:832px;height:1px;background:#ababab"></div>
<div class="r" style="left:19px;top:212px;width:1px;height:14px;background:linear-gradient(#e0e0e0,#ababab)"></div>
<div class="r" style="left:64px;top:212px;width:1px;height:14px;background:linear-gradient(#e0e0e0,#ababab)"></div>
<div class="r" style="left:109px;top:212px;width:1px;height:14px;background:linear-gradient(#e0e0e0,#ababab)"></div>
<div class="r" style="left:154px;top:212px;width:1px;height:14px;background:linear-gradient(#e0e0e0,#ababab)"></div>
<div class="r" style="left:199px;top:212px;width:1px;height:14px;background:linear-gradient(#e0e0e0,#ababab)"></div>
<div class="r" style="left:244px;top:212px;width:1px;height:14px;background:linear-gradient(#e0e0e0,#ababab)"></div>
<div class="r" style="left:289px;top:212px;width:1px;height:14px;background:linear-gradient(#e0e0e0,#ababab)"></div>
<div class="r" style="left:334px;top:212px;width:1px;height:14px;background:linear-gradient(#e0e0e0,#ababab)"></div>
<div class="r" style="left:379px;top:212px;width:1px;height:14px;background:linear-gradient(#e0e0e0,#ababab)"></div>
<div class="r" style="left:424px;top:212px;width:1px;height:14px;background:linear-gradient(#e0e0e0,#ababab)"></div>
<div class="r" style="left:469px;top:212px;width:1px;height:14px;background:linear-gradient(#e0e0e0,#ababab)"></div>
<div class="r" style="left:514px;top:212px;width:1px;height:14px;background:linear-gradient(#e0e0e0,#ababab)"></div>
<div class="r" style="left:559px;top:212px;width:1px;height:14px;background:linear-gradient(#e0e0e0,#ababab)"></div>
<div class="r" style="left:604px;top:212px;width:1px;height:14px;background:linear-gradient(#e0e0e0,#ababab)"></div>
<div class="r" style="left:674px;top:212px;width:1px;height:14px;background:linear-gradient(#e0e0e0,#ababab)"></div>
<div class="r" style="left:719px;top:212px;width:1px;height:14px;background:linear-gradient(#e0e0e0,#ababab)"></div>
<div class="r" style="left:764px;top:212px;width:1px;height:14px;background:linear-gradient(#e0e0e0,#ababab)"></div>
<div class="r" style="left:809px;top:212px;width:1px;height:14px;background:linear-gradient(#e0e0e0,#ababab)"></div>
<svg class="abs" style="left:9px;top:215px" width="9" height="9"><path d="M7 2V7.500H1.500z" fill="#b4b4b4"/></svg>
<div class="r" style="left:0px;top:227px;width:20px;height:422px;background:#e6e6e6"></div>
<div class="r" style="left:19px;top:227px;width:1px;height:422px;background:#ababab"></div>
<div class="r" style="left:0px;top:251px;width:19px;height:1px;background:#b4b4b4;background:linear-gradient(90deg,#cfcfcf,#a0a0a0)"></div>
<div class="r" style="left:0px;top:266px;width:19px;height:1px;background:#b4b4b4;background:linear-gradient(90deg,#cfcfcf,#a0a0a0)"></div>
<div class="r" style="left:0px;top:280px;width:19px;height:1px;background:#b4b4b4;background:linear-gradient(90deg,#cfcfcf,#a0a0a0)"></div>
<div class="r" style="left:0px;top:294px;width:19px;height:1px;background:#b4b4b4;background:linear-gradient(90deg,#cfcfcf,#a0a0a0)"></div>
<div class="r" style="left:0px;top:309px;width:19px;height:1px;background:#b4b4b4;background:linear-gradient(90deg,#cfcfcf,#a0a0a0)"></div>
<div class="r" style="left:0px;top:324px;width:19px;height:1px;background:#b4b4b4;background:linear-gradient(90deg,#cfcfcf,#a0a0a0)"></div>
<div class="r" style="left:0px;top:339px;width:19px;height:1px;background:#b4b4b4;background:linear-gradient(90deg,#cfcfcf,#a0a0a0)"></div>
<div class="r" style="left:0px;top:354px;width:19px;height:1px;background:#b4b4b4;background:linear-gradient(90deg,#cfcfcf,#a0a0a0)"></div>
<div class="r" style="left:0px;top:369px;width:19px;height:1px;background:#b4b4b4;background:linear-gradient(90deg,#cfcfcf,#a0a0a0)"></div>
<div class="r" style="left:0px;top:384px;width:19px;height:1px;background:#b4b4b4;background:linear-gradient(90deg,#cfcfcf,#a0a0a0)"></div>
<div class="r" style="left:0px;top:399px;width:19px;height:1px;background:#b4b4b4;background:linear-gradient(90deg,#cfcfcf,#a0a0a0)"></div>
<div class="r" style="left:0px;top:414px;width:19px;height:1px;background:#b4b4b4;background:linear-gradient(90deg,#cfcfcf,#a0a0a0)"></div>
<div class="r" style="left:0px;top:429px;width:19px;height:1px;background:#b4b4b4;background:linear-gradient(90deg,#cfcfcf,#a0a0a0)"></div>
<div class="r" style="left:0px;top:444px;width:19px;height:1px;background:#b4b4b4;background:linear-gradient(90deg,#cfcfcf,#a0a0a0)"></div>
<div class="r" style="left:0px;top:459px;width:19px;height:1px;background:#b4b4b4;background:linear-gradient(90deg,#cfcfcf,#a0a0a0)"></div>
<div class="r" style="left:0px;top:487px;width:19px;height:1px;background:#b4b4b4;background:linear-gradient(90deg,#cfcfcf,#a0a0a0)"></div>
<div class="r" style="left:0px;top:502px;width:19px;height:1px;background:#b4b4b4;background:linear-gradient(90deg,#cfcfcf,#a0a0a0)"></div>
<div class="r" style="left:0px;top:517px;width:19px;height:1px;background:#b4b4b4;background:linear-gradient(90deg,#cfcfcf,#a0a0a0)"></div>
<div class="r" style="left:0px;top:532px;width:19px;height:1px;background:#b4b4b4;background:linear-gradient(90deg,#cfcfcf,#a0a0a0)"></div>
<div class="r" style="left:0px;top:547px;width:19px;height:1px;background:#b4b4b4;background:linear-gradient(90deg,#cfcfcf,#a0a0a0)"></div>
<div class="r" style="left:0px;top:562px;width:19px;height:1px;background:#b4b4b4;background:linear-gradient(90deg,#cfcfcf,#a0a0a0)"></div>
<div class="r" style="left:0px;top:577px;width:19px;height:1px;background:#b4b4b4;background:linear-gradient(90deg,#cfcfcf,#a0a0a0)"></div>
<div class="r" style="left:0px;top:592px;width:19px;height:1px;background:#b4b4b4;background:linear-gradient(90deg,#cfcfcf,#a0a0a0)"></div>
<div class="r" style="left:0px;top:607px;width:19px;height:1px;background:#b4b4b4;background:linear-gradient(90deg,#cfcfcf,#a0a0a0)"></div>
<div class="r" style="left:0px;top:622px;width:19px;height:1px;background:#b4b4b4;background:linear-gradient(90deg,#cfcfcf,#a0a0a0)"></div>
<div class="r" style="left:0px;top:637px;width:19px;height:1px;background:#b4b4b4;background:linear-gradient(90deg,#cfcfcf,#a0a0a0)"></div>
<div class="r" style="left:0px;top:325px;width:18px;height:15px;background:#d2d2d2"></div>
<div class="r" style="left:18px;top:324px;width:2px;height:17px;background:#217346"></div>
<div class="r" style="left:0px;top:648px;width:100px;height:1px;background:#a6a6a6"></div><div class="r" style="left:100px;top:648px;width:64px;height:1px;background:#fff"></div><div class="r" style="left:164px;top:648px;width:668px;height:1px;background:#a6a6a6"></div>
</div>
<div id="labels">
<span class="t" style="left:20.0px;top:12.84px;font-size:12px;letter-spacing:-0.336px;color:#ffffff">File</span>
<span class="t" style="left:73.2px;top:12.84px;font-size:12px;letter-spacing:0.196px;color:#217346">Home</span>
<span class="t" style="left:133.2px;top:12.84px;font-size:12px;letter-spacing:-0.203px;color:#ffffff">Insert</span>
<span class="t" style="left:189.6px;top:12.84px;font-size:12px;letter-spacing:-0.290px;color:#ffffff">Page Layout</span>
<span class="t" style="left:281.6px;top:12.84px;font-size:12px;letter-spacing:-0.227px;color:#ffffff">Formulas</span>
<span class="t" style="left:357.7px;top:12.84px;font-size:12px;letter-spacing:-0.515px;color:#ffffff">Data</span>
<span class="t" style="left:408.5px;top:12.84px;font-size:12px;letter-spacing:-0.493px;color:#ffffff">Review</span>
<span class="t" style="left:472.0px;top:12.84px;font-size:12px;letter-spacing:-0.199px;color:#ffffff">View</span>
<span class="t" style="left:523.9px;top:12.84px;font-size:12px;letter-spacing:-0.167px;color:#ffffff">Developer</span>
<span class="t" style="left:604.0px;top:12.84px;font-size:12px;letter-spacing:0.178px;color:#ffffff">Help</span>
<span class="t" style="left:684.1px;top:12.84px;font-size:12px;letter-spacing:0.049px;color:#ffffff">Tell me what you want to do</span>
<span class="t" style="left:72.5px;top:43.24px;font-size:12px;letter-spacing:-0.062px;color:#262626">Cut</span>
<span class="t" style="left:72.5px;top:65.84px;font-size:12px;letter-spacing:-0.129px;color:#262626">Copy</span>
<span class="t" style="left:72.5px;top:89.24px;font-size:12px;letter-spacing:-0.097px;color:#262626">Format Painter</span>
<span class="t" style="left:15.5px;top:77.24px;font-size:12px;letter-spacing:-0.537px;color:#262626">Paste</span>
<span class="t" style="left:48.5px;top:112.24px;font-size:12px;letter-spacing:-0.153px;color:#444444">Clipboard</span>
<span class="t" style="left:176.5px;top:51.24px;font-size:12px;letter-spacing:-0.074px;color:#262626">Calibri</span>
<span class="t" style="left:288.0px;top:51.24px;font-size:12px;letter-spacing:-1.734px;color:#262626">11</span>
<span class="t" style="left:251.5px;top:112.24px;font-size:12px;letter-spacing:-0.129px;color:#444444">Font</span>
<span class="t" style="left:537.0px;top:50.74px;font-size:12px;letter-spacing:-0.175px;color:#262626">Wrap Text</span>
<span class="t" style="left:537.0px;top:82.24px;font-size:12px;letter-spacing:0.057px;color:#262626">Merge &amp; Center</span>
<span class="t" style="left:479.0px;top:112.24px;font-size:12px;letter-spacing:-0.042px;color:#444444">Alignment</span>
<span class="t" style="left:661.5px;top:51.24px;font-size:12px;letter-spacing:-0.529px;color:#262626">General</span>
<span class="t" style="left:694.5px;top:112.24px;font-size:12px;letter-spacing:-0.365px;color:#444444">Number</span>
<span class="t" style="left:810.5px;top:77.24px;font-size:12px;letter-spacing:0.041px;color:#262626">Conditional</span>
<span class="t" style="left:807.5px;top:92.74px;font-size:12px;letter-spacing:0.164px;color:#262626">Formatting</span>
<span class="t" style="left:12.5px;top:144.84px;font-size:12px;letter-spacing:-0.453px;color:#444444">Y13</span>
<span class="t" style="left:39.2px;top:214.37px;font-size:10.2px;letter-spacing:0.000px;color:#202020;transform:scaleX(0.9);transform-origin:0 0">A</span>
<span class="t" style="left:84.2px;top:214.37px;font-size:10.2px;letter-spacing:0.000px;color:#202020;transform:scaleX(0.9);transform-origin:0 0">B</span>
<span class="t" style="left:129.0px;top:214.37px;font-size:10.2px;letter-spacing:0.000px;color:#202020;transform:scaleX(0.9);transform-origin:0 0">C</span>
<span class="t" style="left:174.0px;top:214.37px;font-size:10.2px;letter-spacing:0.000px;color:#202020;transform:scaleX(0.9);transform-origin:0 0">D</span>
<span class="t" style="left:219.2px;top:214.37px;font-size:10.2px;letter-spacing:0.000px;color:#202020;transform:scaleX(0.9);transform-origin:0 0">E</span>
<span class="t" style="left:264.5px;top:214.37px;font-size:10.2px;letter-spacing:0.000px;color:#202020;transform:scaleX(0.9);transform-origin:0 0">F</span>
<span class="t" style="left:308.7px;top:214.37px;font-size:10.2px;letter-spacing:0.000px;color:#202020;transform:scaleX(0.9);transform-origin:0 0">G</span>
<span class="t" style="left:354.0px;top:214.37px;font-size:10.2px;letter-spacing:0.000px;color:#202020;transform:scaleX(0.9);transform-origin:0 0">H</span>
<span class="t" style="left:401.0px;top:214.37px;font-size:10.2px;letter-spacing:0.000px;color:#202020;transform:scaleX(0.9);transform-origin:0 0">I</span>
<span class="t" style="left:445.0px;top:214.37px;font-size:10.2px;letter-spacing:0.000px;color:#202020;transform:scaleX(0.9);transform-origin:0 0">J</span>
<span class="t" style="left:489.2px;top:214.37px;font-size:10.2px;letter-spacing:0.000px;color:#202020;transform:scaleX(0.9);transform-origin:0 0">K</span>
<span class="t" style="left:534.7px;top:214.37px;font-size:10.2px;letter-spacing:0.000px;color:#202020;transform:scaleX(0.9);transform-origin:0 0">L</span>
<span class="t" style="left:578.5px;top:214.37px;font-size:10.2px;letter-spacing:0.000px;color:#202020;transform:scaleX(0.9);transform-origin:0 0">M</span>
<span class="t" style="left:636.5px;top:214.37px;font-size:10.2px;letter-spacing:0.000px;color:#202020;transform:scaleX(0.9);transform-origin:0 0">N</span>
<span class="t" style="left:693.7px;top:214.37px;font-size:10.2px;letter-spacing:0.000px;color:#202020;transform:scaleX(0.9);transform-origin:0 0">O</span>
<span class="t" style="left:739.2px;top:214.37px;font-size:10.2px;letter-spacing:0.000px;color:#202020;transform:scaleX(0.9);transform-origin:0 0">P</span>
<span class="t" style="left:783.7px;top:214.37px;font-size:10.2px;letter-spacing:0.000px;color:#202020;transform:scaleX(0.9);transform-origin:0 0">Q</span>
<span class="t" style="left:828.7px;top:214.37px;font-size:10.2px;letter-spacing:0.000px;color:#202020;transform:scaleX(0.9);transform-origin:0 0">R</span>
<span class="t" style="left:7.1px;top:239.53px;font-size:10px;letter-spacing:-0.762px;color:#202020">7</span>
<span class="t" style="left:7.1px;top:254.53px;font-size:10px;letter-spacing:-0.762px;color:#202020">8</span>
<span class="t" style="left:7.1px;top:268.54px;font-size:10px;letter-spacing:-0.762px;color:#202020">9</span>
<span class="t" style="left:5.8px;top:282.54px;font-size:10px;letter-spacing:-0.912px;color:#202020">10</span>
<span class="t" style="left:5.8px;top:297.54px;font-size:10px;letter-spacing:-0.545px;color:#202020">11</span>
<span class="t" style="left:5.8px;top:312.54px;font-size:10px;letter-spacing:-0.912px;color:#202020">12</span>
<span class="t" style="left:5.8px;top:327.54px;font-size:10px;letter-spacing:-0.912px;color:#202020">13</span>
<span class="t" style="left:5.8px;top:342.54px;font-size:10px;letter-spacing:-0.912px;color:#202020">14</span>
<span class="t" style="left:5.8px;top:357.54px;font-size:10px;letter-spacing:-0.912px;color:#202020">15</span>
<span class="t" style="left:5.8px;top:372.54px;font-size:10px;letter-spacing:-0.912px;color:#202020">16</span>
<span class="t" style="left:5.8px;top:387.54px;font-size:10px;letter-spacing:-0.912px;color:#202020">17</span>
<span class="t" style="left:5.8px;top:402.54px;font-size:10px;letter-spacing:-0.912px;color:#202020">18</span>
<span class="t" style="left:5.8px;top:417.54px;font-size:10px;letter-spacing:-0.912px;color:#202020">19</span>
<span class="t" style="left:5.8px;top:432.54px;font-size:10px;letter-spacing:-0.912px;color:#202020">20</span>
<span class="t" style="left:5.8px;top:447.54px;font-size:10px;letter-spacing:-0.912px;color:#202020">21</span>
<span class="t" style="left:5.8px;top:475.54px;font-size:10px;letter-spacing:-0.912px;color:#202020">22</span>
<span class="t" style="left:5.8px;top:490.54px;font-size:10px;letter-spacing:-0.912px;color:#202020">23</span>
<span class="t" style="left:5.8px;top:505.54px;font-size:10px;letter-spacing:-0.912px;color:#202020">24</span>
<span class="t" style="left:5.8px;top:520.53px;font-size:10px;letter-spacing:-0.912px;color:#202020">25</span>
<span class="t" style="left:5.8px;top:535.53px;font-size:10px;letter-spacing:-0.912px;color:#202020">26</span>
<span class="t" style="left:5.8px;top:550.53px;font-size:10px;letter-spacing:-0.912px;color:#202020">27</span>
<span class="t" style="left:5.8px;top:565.53px;font-size:10px;letter-spacing:-0.912px;color:#202020">28</span>
<span class="t" style="left:5.8px;top:580.53px;font-size:10px;letter-spacing:-0.912px;color:#202020">29</span>
<span class="t" style="left:5.8px;top:595.53px;font-size:10px;letter-spacing:-0.912px;color:#202020">30</span>
<span class="t" style="left:5.8px;top:610.53px;font-size:10px;letter-spacing:-0.912px;color:#202020">31</span>
<span class="t" style="left:5.8px;top:625.53px;font-size:10px;letter-spacing:-0.912px;color:#202020">32</span>
<span class="t" style="left:5.8px;top:640.53px;font-size:10px;letter-spacing:-0.912px;color:#202020">33</span>
<span class="t" style="left:202.2px;top:238.54px;font-size:11.3px;letter-spacing:0.162px;color:#000000;font-family:'Liberation Serif',serif">Mã số thuế: 03000000</span>
<span class="t" style="left:299.6px;top:266.06px;font-size:16px;letter-spacing:0.533px;color:#000000;font-weight:bold">HÓA ĐƠN</span>
<span class="t" style="left:269.3px;top:290.56px;font-size:16px;letter-spacing:-0.015px;color:#000000;font-weight:bold">GIÁ TRỊ GIA TĂNG</span>
<span class="t" style="left:276.8px;top:327.74px;font-size:10px;letter-spacing:0.372px;color:#000000">Liên 2: Giao cho người mua</span>
<span class="t" style="left:247.6px;top:341.77px;font-size:10.67px;letter-spacing:-0.115px;color:#000000">Ngày 20</span>
<span class="t" style="left:294.0px;top:341.77px;font-size:10.67px;letter-spacing:-0.023px;color:#000000">tháng 9</span>
<span class="t" style="left:337.4px;top:341.77px;font-size:10.67px;letter-spacing:-0.176px;color:#000000">năm 2012</span>
<span class="t" style="left:22.3px;top:371.77px;font-size:10.67px;letter-spacing:-0.061px;color:#000000">Họ tên người mua hàng:</span>
<span class="t" style="left:22.3px;top:386.77px;font-size:10.67px;letter-spacing:-0.098px;color:#000000">Tên đơn vị:</span>
<span class="t" style="left:22.3px;top:401.77px;font-size:10.67px;letter-spacing:0.019px;color:#000000">Địa chỉ:</span>
<span class="t" style="left:22.3px;top:416.77px;font-size:10.67px;letter-spacing:-0.117px;color:#000000">Số tài khoản:</span>
<span class="t" style="left:22.3px;top:446.77px;font-size:10.67px;letter-spacing:-0.043px;color:#000000">Hình thức thanh toán:</span>
<span class="t" style="left:411.4px;top:446.77px;font-size:10.67px;letter-spacing:-0.008px;color:#000000">Mã số thuế:</span>
<span class="t" style="left:32.4px;top:468.77px;font-size:10.67px;letter-spacing:-0.680px;color:#000000">STT</span>
<span class="t" style="left:191.4px;top:467.97px;font-size:10.67px;letter-spacing:0.044px;color:#000000">Tên hàng hóa, dịch vụ</span>
<span class="t" style="left:430.7px;top:461.67px;font-size:10.67px;letter-spacing:0.420px;color:#000000">Đơn vị</span>
<span class="t" style="left:439.0px;top:474.97px;font-size:10.67px;letter-spacing:-0.245px;color:#000000">tính</span>
<span class="t" style="left:485.4px;top:461.67px;font-size:10.67px;letter-spacing:0.777px;color:#000000">Số</span>
<span class="t" style="left:478.4px;top:474.97px;font-size:10.67px;letter-spacing:-0.089px;color:#000000">lượng</span>
<span class="t" style="left:527.2px;top:461.67px;font-size:10.67px;letter-spacing:0.325px;color:#000000">Đơn</span>
<span class="t" style="left:531.8px;top:474.97px;font-size:10.67px;letter-spacing:-0.478px;color:#000000">giá</span>
<span class="t" style="left:593.4px;top:467.57px;font-size:10.67px;letter-spacing:-0.156px;color:#000000">Thành tiền</span>
<span class="t" style="left:35.7px;top:488.57px;font-size:10.67px;letter-spacing:0.090px;color:#000000">(1)</span>
<span class="t" style="left:237.5px;top:489.47px;font-size:10.67px;letter-spacing:0.156px;color:#000000">(2)</span>
<span class="t" style="left:440.0px;top:488.87px;font-size:10.67px;letter-spacing:0.656px;color:#000000">(3)</span>
<span class="t" style="left:486.0px;top:488.87px;font-size:10.67px;letter-spacing:0.656px;color:#000000">(4)</span>
<span class="t" style="left:530.7px;top:488.87px;font-size:10.67px;letter-spacing:0.590px;color:#000000">(5)</span>
<span class="t" style="left:593.4px;top:490.37px;font-size:10.67px;letter-spacing:0.316px;color:#000000">(6)=(4)x(5)</span>
<span class="t" style="left:565.9px;top:302.47px;font-size:8.9px;letter-spacing:0.088px;color:#000000;font-weight:bold">Mẫu số: 01GTKT3/001</span>
<span class="t" style="left:565.9px;top:314.07px;font-size:8.9px;letter-spacing:0.044px;color:#000000;font-weight:bold">Ký hiệu: AA/12P</span>
<span class="t" style="left:565.9px;top:351.07px;font-size:8.9px;letter-spacing:-0.097px;color:#000000;font-weight:bold">Số hóa đơn:</span>
<span class="t" style="left:333.0px;top:49.95px;font-size:14px;letter-spacing:0.256px;color:#444444">A</span>
<span class="t" style="left:356.3px;top:52.49px;font-size:11px;letter-spacing:0.156px;color:#444444">A</span>
<span class="t" style="left:179.8px;top:80.77px;font-size:11.5px;letter-spacing:-0.713px;color:#444444;font-weight:bold">B</span>
<span class="t" style="left:202.8px;top:80.45px;font-size:12px;letter-spacing:0.928px;color:#444444;font-family:'Liberation Serif',serif;font-weight:bold;font-style:italic">I</span>
<span class="t" style="left:223.6px;top:80.77px;font-size:11.5px;letter-spacing:-0.612px;color:#444444">U</span>
<span class="t" style="left:343.5px;top:79.17px;font-size:13.5px;letter-spacing:0.684px;color:#444444">A</span>
<span class="t" style="left:697.0px;top:80.43px;font-size:14.5px;letter-spacing:0.094px;color:#505050">%</span>
<span class="t" style="left:722.6px;top:68.78px;font-size:22px;letter-spacing:-1.100px;color:#505050;font-family:'Liberation Serif',serif;font-weight:bold">,</span>
<span class="t" style="left:519.9px;top:46.94px;font-size:10px;letter-spacing:0.438px;color:#444444">ab</span>
<span class="t" style="left:520.3px;top:54.14px;font-size:10px;letter-spacing:-0.400px;color:#444444">c</span>
<span class="t" style="left:756.6px;top:78.96px;font-size:8.2px;letter-spacing:-0.522px;color:#444444">.0</span>
<span class="t" style="left:750.6px;top:86.16px;font-size:8.2px;letter-spacing:0.136px;color:#444444">.00</span>
<span class="t" style="left:773.2px;top:78.96px;font-size:8.2px;letter-spacing:0.103px;color:#444444">.00</span>
<span class="t" style="left:779.0px;top:86.16px;font-size:8.2px;letter-spacing:-0.472px;color:#444444">.0</span>
<span class="t" style="left:222.2px;top:142.16px;font-size:14.5px;letter-spacing:2.556px;color:#4a4a4a;font-family:'Liberation Serif',serif;font-weight:bold;font-style:italic">f</span>
<span class="t" style="left:228.3px;top:145.51px;font-size:10.5px;letter-spacing:0.450px;color:#4a4a4a;font-family:'Liberation Serif',serif;font-weight:bold;font-style:italic">x</span>
</div>
</body></html>
